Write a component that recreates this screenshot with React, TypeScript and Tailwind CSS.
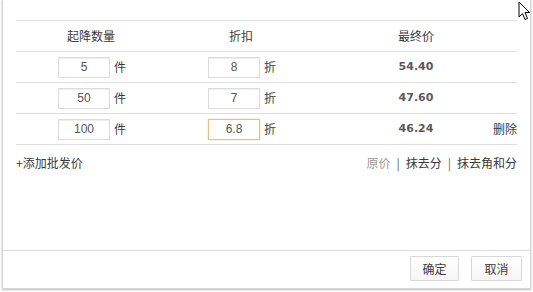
import React from "react";

const rows = [
  { qty: "5", disc: "8", price: "54.40", del: false, focus: false },
  { qty: "50", disc: "7", price: "47.60", del: false, focus: false },
  { qty: "100", disc: "6.8", price: "46.24", del: true, focus: true },
];

const cjk = "font-['Noto_Sans_CJK_SC','Noto_Sans',sans-serif]";

function Box({ value, focus }: { value: string; focus?: boolean }) {
  return (
    <div
      className={
        "w-[52px] h-[21px] flex items-center justify-center bg-white text-[12px] text-[#555] font-['Liberation_Sans',sans-serif] " +
        (focus
          ? "border border-[#e3c27a] shadow-[0_0_2px_#f3dfa8]"
          : "border border-[#dcdcdc] shadow-[inset_0_1px_1px_#eee]")
      }
    >
      {value}
    </div>
  );
}

export default function App() {
  return (
    <div className={"w-[533px] h-[292px] bg-white relative " + cjk}>
      <div className="ml-[2px] w-[529px] h-[289px] border-l border-r border-b border-[#d6d6d6] shadow-[0_1px_2px_#bbb] flex flex-col">
        <div className="px-[13px] pt-[20px] h-[250px]">
          <div className="border-t border-[#dedede] text-[12px] text-[#3a3a3a]">
            <div className="flex h-[31px] items-center border-b border-[#dedede]">
              <div className="w-[150px] text-center">起降数量</div>
              <div className="w-[150px] text-center">折扣</div>
              <div className="w-[150px] pl-[50px] text-center">最终价</div>
              <div className="flex-1" />
            </div>
            {rows.map((r, i) => (
              <div key={i} className="flex h-[31px] items-center border-b border-[#dedede]">
                <div className="w-[150px] flex items-center justify-center gap-[4px] pl-[3px]">
                  <Box value={r.qty} />
                  <span className="w-[13px]">件</span>
                </div>
                <div className="w-[150px] flex items-center justify-center gap-[4px] pl-[3px]">
                  <Box value={r.disc} focus={r.focus} />
                  <span className="w-[13px]">折</span>
                </div>
                <div className="w-[150px] pl-[50px] text-center font-['DejaVu_Sans',sans-serif] font-bold text-[11px] text-[#5a5a5a]">
                  {r.price}
                </div>
                <div className="flex-1 text-right">{r.del ? "删除" : ""}</div>
              </div>
            ))}
            <div className="flex items-center justify-between mt-[10px] leading-[16px]">
              <span>+添加批发价</span>
              <span className="flex items-center">
                <span className="text-[#999]">原价</span>
                <span className="text-[#666] mx-[6px]">|</span>
                <span>抹去分</span>
                <span className="text-[#666] mx-[6px]">|</span>
                <span>抹去角和分</span>
              </span>
            </div>
          </div>
        </div>
        <div className="border-t border-[#dadada] flex justify-end items-start gap-[12px] pt-[5px] pr-[8px] text-[12px] text-[#3a3a3a]">
          <button className="w-[49px] h-[25px] border border-[#d8d8d8] bg-gradient-to-b from-white to-[#f6f6f6] rounded-[1px]">确定</button>
          <button className="w-[51px] h-[25px] border border-[#d8d8d8] bg-gradient-to-b from-white to-[#f6f6f6] rounded-[1px]">取消</button>
        </div>
      </div>
      <svg className="absolute left-[518px] top-[1px]" width="13" height="20" viewBox="0 0 13 20">
        <path d="M1 1 L1 16 L4.5 12.5 L7 18.5 L9.5 17.5 L7 11.5 L11.5 11.5 Z" fill="white" stroke="black" strokeWidth="1" strokeLinejoin="miter" />
      </svg>
    </div>
  );
}
